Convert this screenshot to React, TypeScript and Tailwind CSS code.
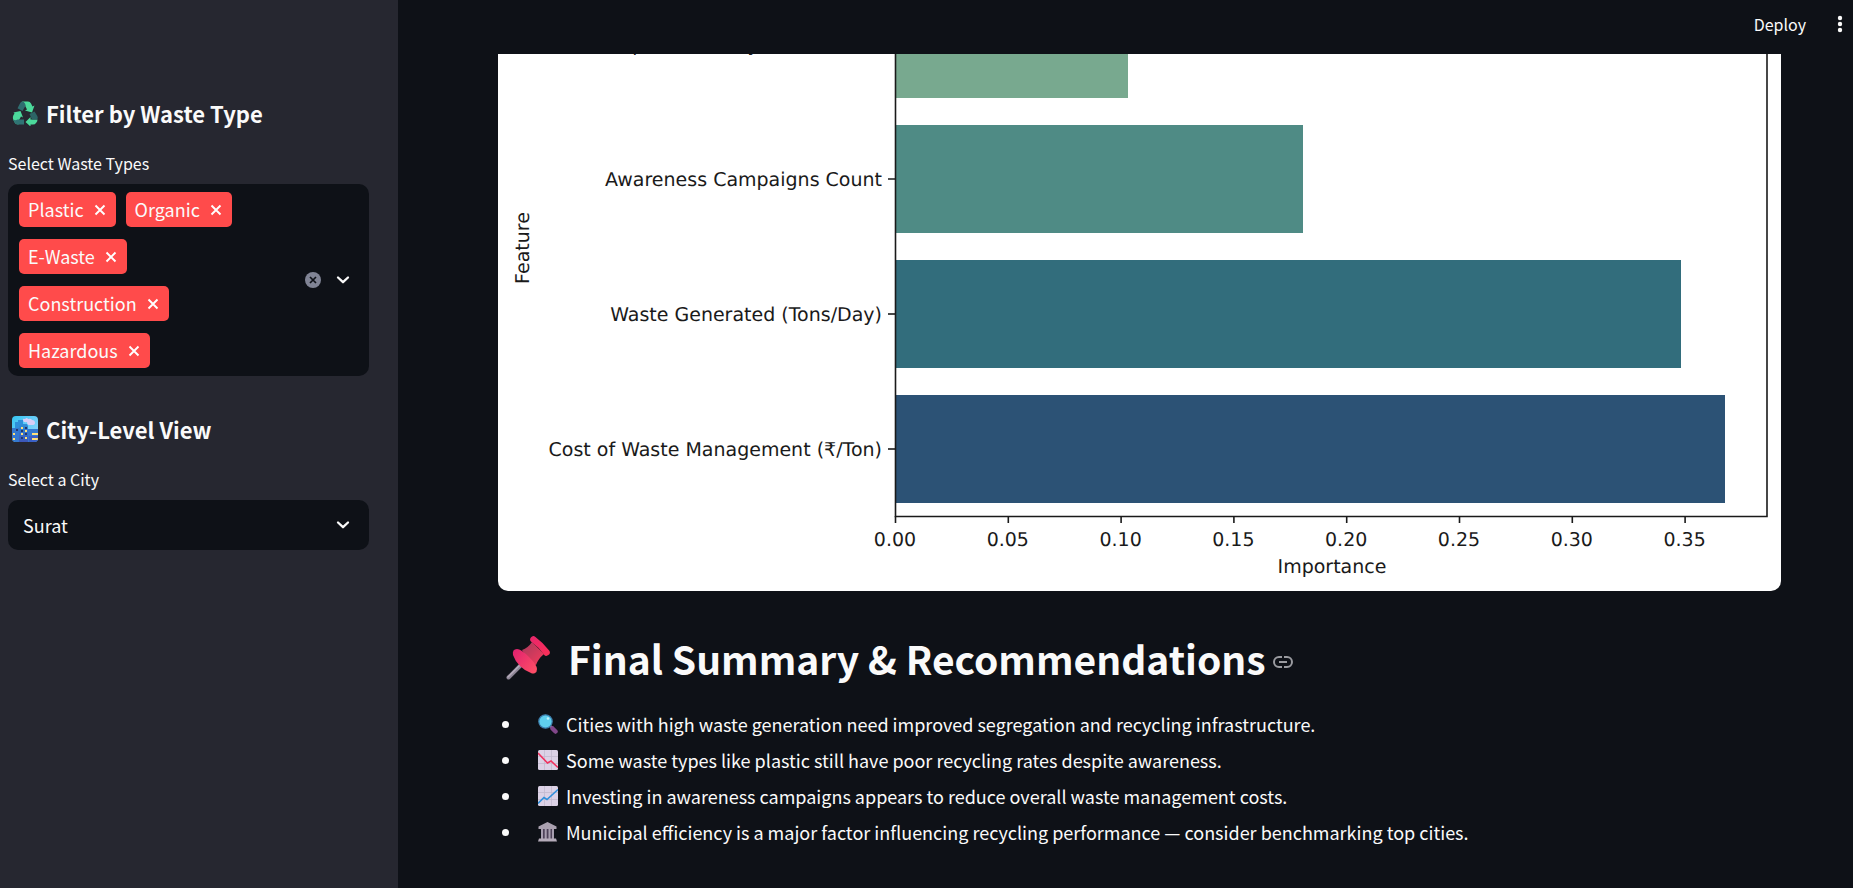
import { useState } from "react";

const WASTE_TYPES = ["Plastic", "Organic", "E-Waste", "Construction", "Hazardous"];
const CITIES = ["Surat", "Mumbai", "Delhi", "Pune", "Chennai"];

const BARS = [
  { label: "Municipal Efficiency Score (1-10)", width: 233, top: -64, color: "#78a98f" },
  { label: "Awareness Campaigns Count", width: 408, top: 71, color: "#4f8b85" },
  { label: "Waste Generated (Tons/Day)", width: 786, top: 206, color: "#326d7c" },
  { label: "Cost of Waste Management (₹/Ton)", width: 830, top: 341, color: "#2c5275" },
];
const TICKS = ["0.00", "0.05", "0.10", "0.15", "0.20", "0.25", "0.30", "0.35"];

function RecycleIcon() {
  return (
    <svg viewBox="0 0 26 26" className="size-[26px]" aria-hidden="true">
      <path d="M10 1.500h6q2 0 3 2l1.500 3 2-1-2.500 7-7-2 2-1-2-4z" fill="#4bd99b" />
      <path d="M10 1.500q2 0 3 2l.7 2-3.200 5.500-5-2.800 2.200-4.200q1-2.200 2.300-2.500z" fill="#2f6d70" />
      <path d="M1.500 12.500l7-1.500 2.500 6.500-2-1-2.500 4.500v3.500q-3 0-4.200-2.500l-1.300-3q-.5-2 .5-4l1-1.500z" fill="#4bd99b" />
      <path d="M5.500 19.500h6.500v5H6q-2.500 0-3.700-2.500l-1-2.500q2 1.500 4.200 0z" fill="#2f7474" />
      <path d="M13.500 22l5-5v2.500h7q0 2-1.500 3.500-1 1.500-3 1.500h-2.500v2z" fill="#4bd99b" />
      <path d="M17.500 14l5-2.500 2.500 4q1.500 2.500 0 4h-5z" fill="#2c6466" />
    </svg>
  );
}

function CityIcon() {
  return (
    <svg viewBox="0 0 26 26" className="size-[26px]" aria-hidden="true">
      <defs>
        <linearGradient id="sky" x1="0" y1="0" x2="1" y2="1">
          <stop offset="0" stopColor="#35c5f2" />
          <stop offset="1" stopColor="#9fd5ff" />
        </linearGradient>
        <linearGradient id="tower" x1="0" y1="0" x2="0" y2="1">
          <stop offset="0" stopColor="#2f8fd8" />
          <stop offset="1" stopColor="#3d55b8" />
        </linearGradient>
        <clipPath id="tile">
          <rect width="26" height="26" rx="4" />
        </clipPath>
      </defs>
      <g clipPath="url(#tile)">
        <rect width="26" height="26" fill="url(#sky)" />
        <path d="M11 4q0-2 2-1 2-2 3 0 3-1 4 1 3 0 3 3 0 2-3 2h-3q-2 0-2-3-4 1-4-2z" fill="#d9cdf7" />
        <path d="M3 6h3V4h5v22H3z" fill="#2e8fdb" />
        <path d="M0 12h7v14H0zM16 13h10v13H16z" fill="#3478cf" />
        <path d="M7 10l2-2h6l1 2v16H7z" fill="url(#tower)" />
        <path d="M17 20h9v6h-9z" fill="#3b5fc4" />
        <path d="M9 11h2v2H9zm4 3h2v2h-2zM9 17h2v2H9zm4 4h2v2h-2zM1 17h2v2H1zm0 5h2v2H1zM20 17h6v2h-6zm0 5h6v2h-6z" fill="#ffe07a" />
        <path d="M13 11h2v2h-2zM9 14h2v2H9zm4 3h2v2h-2zM9 21h2v2H9zM4 13h2v2H4z" fill="#23386f" />
      </g>
    </svg>
  );
}

function PushpinIcon() {
  return (
    <svg viewBox="0 0 46 46" className="size-[46px] shrink-0" aria-hidden="true">
      <defs>
        <linearGradient id="pinCap" gradientUnits="userSpaceOnUse" x1="8" y1="14" x2="34" y2="34">
          <stop offset="0" stopColor="#e0206f" />
          <stop offset="1" stopColor="#ff5066" />
        </linearGradient>
        <linearGradient id="pinTop" gradientUnits="userSpaceOnUse" x1="26" y1="2" x2="44" y2="20">
          <stop offset="0" stopColor="#e8266b" />
          <stop offset="1" stopColor="#fa3058" />
        </linearGradient>
        <linearGradient id="pinNeck" gradientUnits="userSpaceOnUse" x1="18" y1="12" x2="34" y2="28">
          <stop offset="0" stopColor="#b03a5c" />
          <stop offset="1" stopColor="#ea3a5c" />
        </linearGradient>
      </defs>
      <path d="M3.500 42.500L17 29" stroke="#8d8595" strokeWidth="4" strokeLinecap="round" />
      <path d="M3 42L16 29" stroke="#b5acbb" strokeWidth="1.500" strokeLinecap="round" />
      <path d="M17 15Q23 13 27 7L39 19Q33 24 31 30L24 27z" fill="url(#pinNeck)" />
      <path d="M12 14q4 0 12 8 8 8 8 12 0 3-2 4-2 1-4 0-6-2-11-7-5-5-7-11-1-6 4-6z" fill="url(#pinCap)" />
      <path d="M28.500 4.500Q36 10 41.500 17.500" fill="none" stroke="url(#pinTop)" strokeWidth="6.500" strokeLinecap="round" />
    </svg>
  );
}

function MagnifierIcon() {
  return (
    <svg viewBox="0 0 20 20" className="size-5" aria-hidden="true">
      <path d="M12 12l3 2" stroke="#8c7d9c" strokeWidth="2.500" />
      <path d="M14.500 14.500L17.500 17.500" stroke="#81478a" strokeWidth="4.500" strokeLinecap="round" />
      <circle cx="7.500" cy="7.500" r="6.700" fill="#5fd0ee" stroke="#3d7fae" strokeWidth="1.200" />
      <circle cx="10" cy="4.500" r="1.300" fill="#c3f1fb" />
    </svg>
  );
}

function ChartIcon({ rising }: { rising: boolean }) {
  return (
    <svg viewBox="0 0 20 20" className="size-5" aria-hidden="true">
      <rect width="20" height="20" rx="1.500" fill="#dcd2e6" />
      <path d="M0 6.500h20M0 13.500h20M6.500 0v20M13.500 0v20" stroke="#c3bacf" strokeWidth="0.800" />
      {rising ? (
        <path d="M0 17.500L6 11.500L9 13.500L20 3.500" fill="none" stroke="#2f8fdb" strokeWidth="1.600" />
      ) : (
        <path d="M0 3L9.500 13L13 11L20 17.500" fill="none" stroke="#f0325f" strokeWidth="1.600" />
      )}
    </svg>
  );
}

function BuildingIcon() {
  return (
    <svg viewBox="0 0 20 20" className="size-5" aria-hidden="true">
      <path d="M3 7h13v10H3z" fill="#4e4259" />
      <path d="M9.500 0L18.500 4.500V7H.500V4.500z" fill="#aaa1b0" />
      <path d="M3 7h2v10H3zm3.700 0h2v10h-2zm3.800 0h2v10h-2zM14 7h2v10h-2z" fill="#a89fb0" />
      <path d="M1 16.500h17l1 3H0z" fill="#b5acba" />
    </svg>
  );
}

function Chevron() {
  return (
    <svg viewBox="0 0 14 10" className="h-[10px] w-[14px]" aria-hidden="true">
      <path d="M2 2.500L7 7.200L12 2.500" fill="none" stroke="#fafafa" strokeWidth="2.300" strokeLinecap="round" strokeLinejoin="round" />
    </svg>
  );
}

function ImportanceChart() {
  const axisX = 397;
  return (
    <svg
      viewBox="0 0 1283 537"
      role="img"
      aria-label="Feature importance"
      textRendering="geometricPrecision"
      className="block h-auto w-full rounded-b-[10px] bg-white font-['DejaVu_Sans',sans-serif] text-[19px]"
    >
      {BARS.map((bar) => (
        <g key={bar.label}>
          <rect x={axisX} y={bar.top} width={bar.width} height="108" fill={bar.color} />
          <path d={`M390 ${bar.top + 54}h7`} stroke="#1a1a1a" strokeWidth="1.600" />
          <text x="384" y={bar.top + 61} textAnchor="end" fill="#1a1a1a">
            {bar.label}
          </text>
        </g>
      ))}
      <path d="M397.500 0V462.500H1269V0" fill="none" stroke="#1a1a1a" strokeWidth="1.600" />
      {TICKS.map((tick, i) => {
        const x = axisX + i * 112.8;
        return (
          <g key={tick}>
            <path d={`M${x + 0.5} 462v7`} stroke="#1a1a1a" strokeWidth="1.600" />
            <text x={x} y="492" textAnchor="middle" fill="#1a1a1a">
              {tick}
            </text>
          </g>
        );
      })}
      <text x="834" y="519" textAnchor="middle" fill="#1a1a1a">
        Importance
      </text>
      <text transform="translate(31 194) rotate(-90)" textAnchor="middle" fill="#1a1a1a">
        Feature
      </text>
    </svg>
  );
}

const NOTES = [
  { icon: <MagnifierIcon />, text: "Cities with high waste generation need improved segregation and recycling infrastructure." },
  { icon: <ChartIcon rising={false} />, text: "Some waste types like plastic still have poor recycling rates despite awareness." },
  { icon: <ChartIcon rising />, text: "Investing in awareness campaigns appears to reduce overall waste management costs." },
  { icon: <BuildingIcon />, text: "Municipal efficiency is a major factor influencing recycling performance — consider benchmarking top cities." },
];

export default function App() {
  const [types, setTypes] = useState(WASTE_TYPES);
  const [city, setCity] = useState("Surat");

  return (
    <div className="flex h-screen overflow-hidden bg-[#0e1117] font-['Noto_Sans_CJK_SC',sans-serif] text-[#fafafa]">
      <aside className="w-[398px] shrink-0 bg-[#262730] pt-[97px] pr-[29px] pl-2">
        <h2 className="flex h-8 items-center gap-2 pl-1 text-[22px] font-bold">
          <RecycleIcon />
          Filter by Waste Type
        </h2>
        <label htmlFor="waste-types" className="mt-5 flex h-7 items-center text-[16px]">
          Select Waste Types
        </label>
        <div className="mt-[7px] flex min-h-[50px] items-center justify-between rounded-[10px] bg-[#0e1117] py-2 pr-[19px] pl-[11px]">
          <div className="flex max-w-[230px] flex-wrap gap-x-[10px] gap-y-3">
            {types.map((type) => (
              <span key={type} className="flex h-[35px] items-center gap-[10px] rounded-[5px] bg-[#ff4b4b] pr-[10px] pl-[9px] text-[18px]">
                {type}
                <button type="button" aria-label={`Remove ${type}`} onClick={() => setTypes(types.filter((t) => t !== type))}>
                  <svg viewBox="0 0 12 12" className="size-3" aria-hidden="true">
                    <path d="M1.500 1.500l9 9M10.500 1.500l-9 9" stroke="#fff" strokeWidth="1.900" />
                  </svg>
                </button>
              </span>
            ))}
            <input id="waste-types" className="h-0 w-0 bg-transparent outline-none" />
          </div>
          <div className="flex items-center gap-[15px]">
            <button type="button" aria-label="Clear all" onClick={() => setTypes([])}>
              <svg viewBox="0 0 16 16" className="size-4" aria-hidden="true">
                <circle cx="8" cy="8" r="8" fill="#808495" />
                <path d="M5 5l6 6M11 5l-6 6" stroke="#0e1117" strokeWidth="1.700" />
              </svg>
            </button>
            <button type="button" aria-label="Open waste types" onClick={() => setTypes(WASTE_TYPES)}>
              <Chevron />
            </button>
          </div>
        </div>

        <h2 className="mt-[37px] flex h-8 items-center gap-2 pl-1 text-[22px] font-bold">
          <CityIcon />
          City-Level View
        </h2>
        <label htmlFor="city" className="mt-5 flex h-7 items-center text-[16px]">
          Select a City
        </label>
        <div className="mt-[7px] grid items-center rounded-[10px] bg-[#0e1117]">
          <select
            id="city"
            value={city}
            onChange={(e) => setCity(e.target.value)}
            className="col-start-1 row-start-1 h-[50px] w-full appearance-none bg-transparent px-[15px] text-[18px] outline-none"
          >
            {CITIES.map((name) => (
              <option key={name} className="bg-[#0e1117]">
                {name}
              </option>
            ))}
          </select>
          <span className="pointer-events-none col-start-1 row-start-1 mr-[19px] justify-self-end">
            <Chevron />
          </span>
        </div>
      </aside>

      <main className="flex min-w-0 grow flex-col">
        <header className="flex h-[54px] shrink-0 items-center justify-end gap-[31px] pr-[10px] pb-[6px]">
          <button type="button" className="text-[16px]">
            Deploy
          </button>
          <button type="button" aria-label="Main menu">
            <svg viewBox="0 0 6 18" className="h-[18px] w-[6px]" fill="#fafafa" aria-hidden="true">
              <circle cx="3" cy="3" r="2.200" />
              <circle cx="3" cy="9" r="2.200" />
              <circle cx="3" cy="15" r="2.200" />
            </svg>
          </button>
        </header>
        <div className="min-h-0 grow overflow-hidden pr-[72px] pl-[100px]">
          <ImportanceChart />
          <h1 className="mt-8 flex h-[70px] items-center text-[39px] font-bold whitespace-nowrap">
            <span className="pr-[17px] pl-[7px]">
              <PushpinIcon />
            </span>
            Final Summary &amp; Recommendations
            <a href="#final-summary" aria-label="Link to this section" className="pt-2 pl-[7px]">
              <svg viewBox="0 0 20 12" className="h-3 w-5" fill="none" stroke="#9a9ba0" strokeWidth="2" aria-hidden="true">
                <path d="M9 1H6a5 5 0 0 0 0 10h3M11 1h3a5 5 0 0 1 0 10h-3M6 6h8" />
              </svg>
            </a>
          </h1>
          <ul className="mt-[13px]">
            {NOTES.map((note) => (
              <li key={note.text} className="flex h-9 items-center text-[18px] whitespace-nowrap">
                <span className="mr-[29px] ml-1 size-[7px] rounded-full bg-[#fafafa]" />
                {note.icon}
                <span className="pl-2">{note.text}</span>
              </li>
            ))}
          </ul>
        </div>
      </main>
    </div>
  );
}
